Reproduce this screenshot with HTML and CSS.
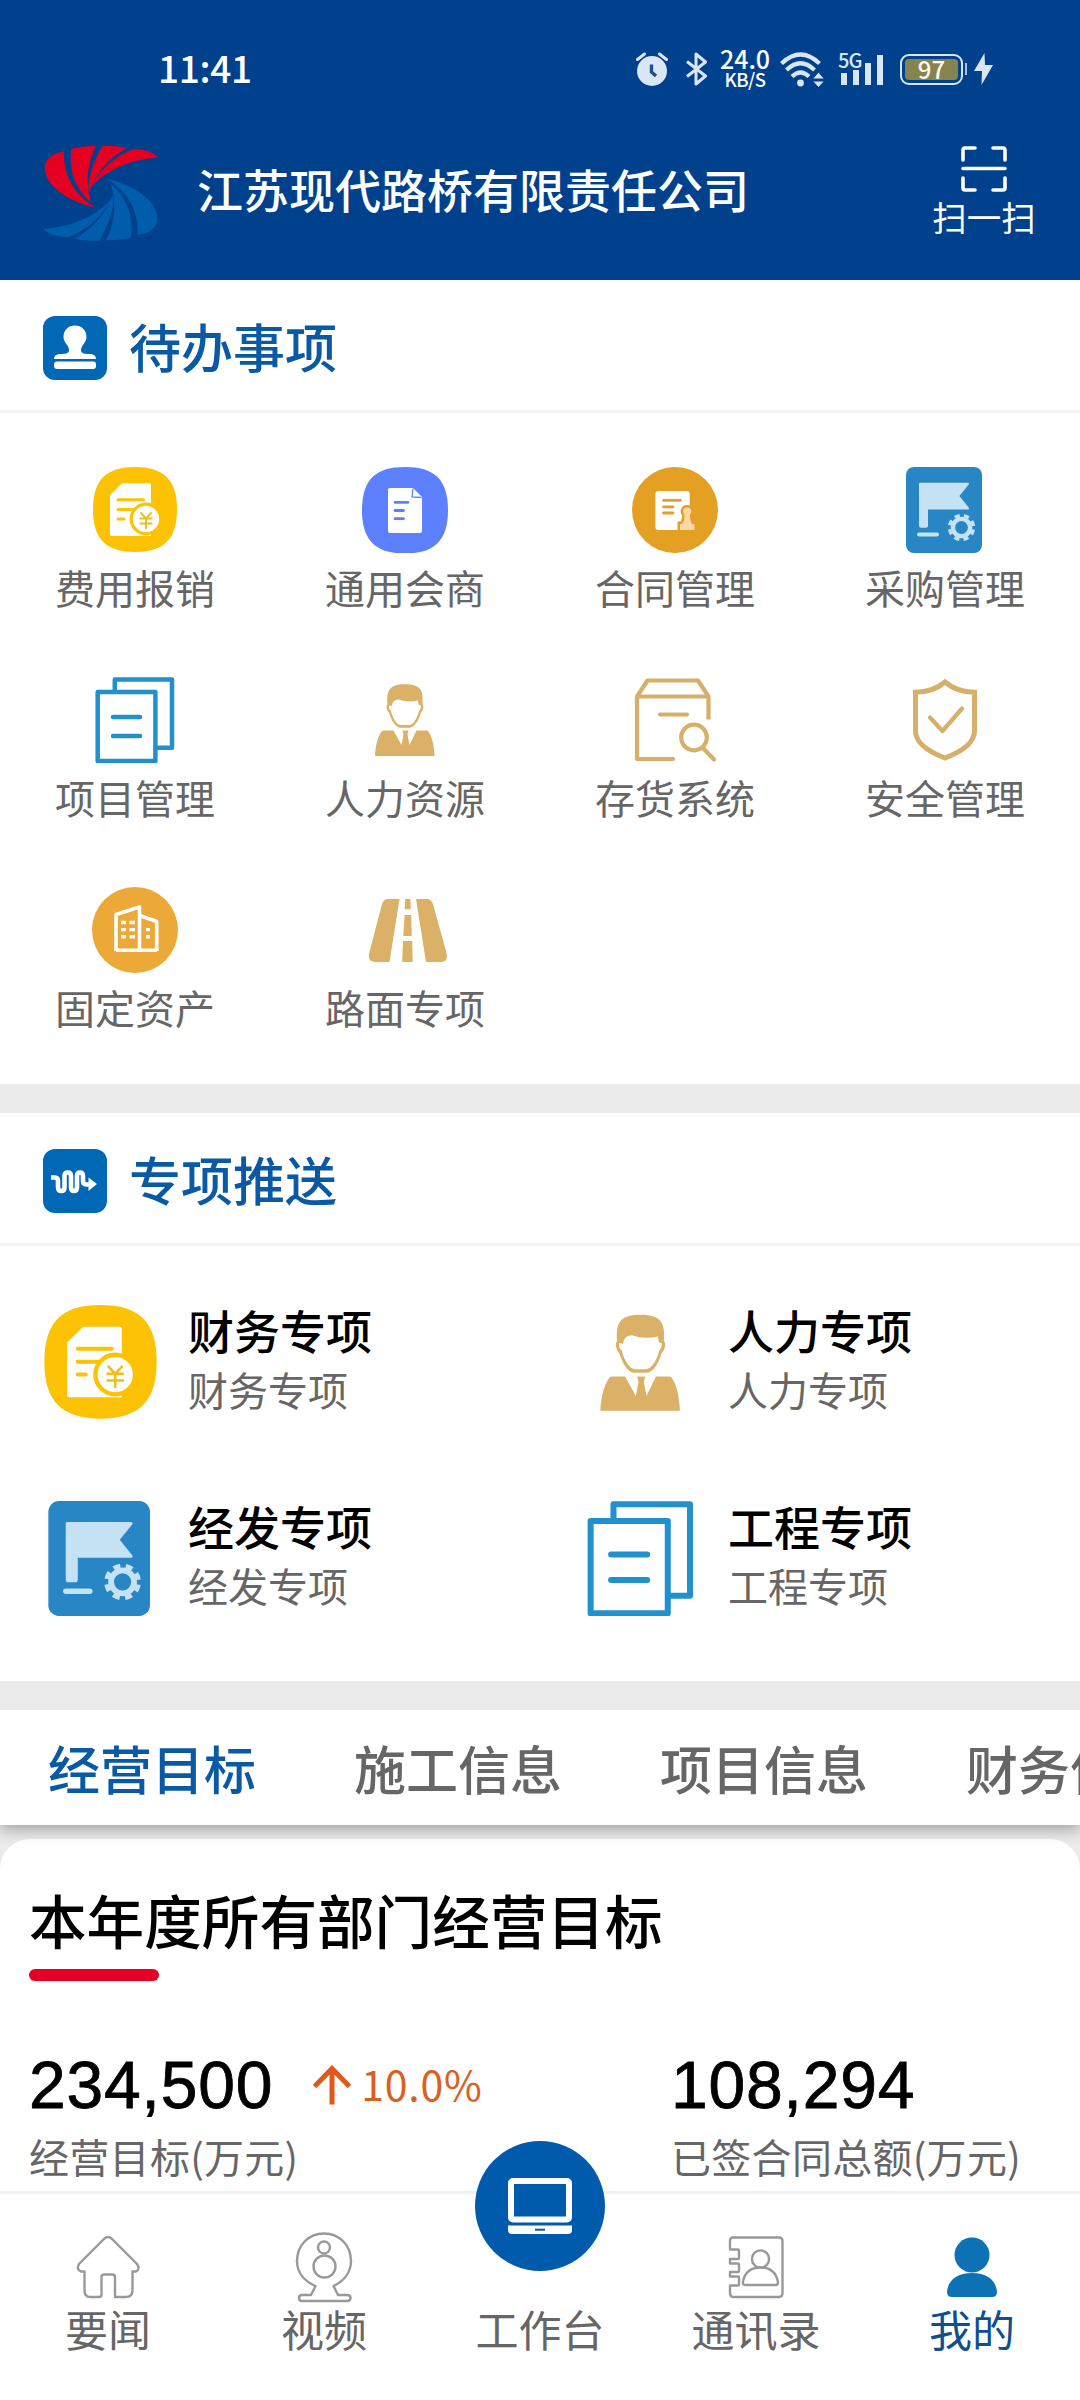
FILE: index.html
```html
<!DOCTYPE html>
<html lang="zh-CN">
<head>
<meta charset="utf-8">
<title>江苏现代路桥有限责任公司</title>
<link rel="stylesheet" href="styles.css">
</head>
<body>
<svg class="defs" aria-hidden="true">
  <symbol id="i-finance" viewBox="0 0 86 86">
    <path fill="#fcc203" d="M43 0C72 0 85 13 85 42.500C85 72 72 85 43 85C14 85 1 72 1 42.500C1 13 14 0 43 0Z"/>
    <path fill="#fff" d="M30 16.300H57Q59 16.300 59 18.300V69H20Q18 69 18 67V28Z"/>
    <path stroke="#fcc203" stroke-width="3" stroke-linecap="round" d="M26 32.700H51.500M26 42.500H46M26 52H32"/>
    <circle cx="54" cy="52" r="14.800" fill="#fff" stroke="#fcc203" stroke-width="3.200"/>
    <path stroke="#f0bd1e" stroke-width="1.900" fill="none" d="M48.500 45.500L54 51.500L59.500 45.500M47.500 51.500H60.500M47.500 56.500H60.500M54 51.500V62"/>
  </symbol>
  <symbol id="i-person" viewBox="0 0 86 86">
    <path fill="#dab167" d="M25.500 27C24.500 14 27 7.300 43 7.300C59 7.300 61.500 14 60.500 27C62.500 29 61 34 58.800 36C56.500 44 52 50.700 47.500 50.700H38.500C34 50.700 29.500 44 27.200 36C25 34 23.500 29 25.500 27Z"/>
    <path fill="#fff" d="M30 29C30.500 25 32 23 37 22.600C42 24.800 49 25 56 23.600C56.500 26 56 28.500 59 28.500C59 31 58.500 33 57 34C55 42 51 48 47 48H39C35 48 31 42 29 34C27.500 33 26.500 31 27 28.500Z"/>
    <path fill="#dab167" d="M13 79C13.500 68 16 59 20 54Q20.500 53.500 22 53.500H31.500L39.500 68L41.500 57.500L40.500 53.500H46.500L45.500 57.500L47.500 68L54.500 53.500H64Q65.500 53.500 66 54C70 59 72 68 72.500 79Z"/>
  </symbol>
  <symbol id="i-flag" viewBox="0 0 86 86">
    <rect x="4" width="76" height="86" rx="8" fill="#2886c4"/>
    <path fill="#c5e1f4" d="M18 15.700H66Q67.500 16 66.700 17.500L57.400 29L66.700 40.500Q67.500 42.500 66 42.500H26V59Q26 60.800 24 60.800H19Q17 60.800 17 59V16.700Q17 15.700 18 15.700Z"/>
    <path stroke="#c5e1f4" stroke-width="4" stroke-linecap="round" d="M17 67.500H35"/>
    <circle cx="59.500" cy="60.500" r="8.600" fill="none" stroke="#c5e1f4" stroke-width="4.400"/>
    <circle cx="59.500" cy="60.500" r="12" fill="none" stroke="#c5e1f4" stroke-width="3.500" stroke-dasharray="5.200 4.225" stroke-dashoffset="-2.100"/>
  </symbol>
  <symbol id="i-docs" viewBox="0 0 86 86">
    <g fill="none" stroke="#2191cd" stroke-width="4.500" stroke-linejoin="round">
      <path d="M22.800 14V2.400H80V70.800H64"/>
      <rect x="5.700" y="15" width="57.700" height="69"/>
      <path stroke-linecap="round" d="M21 40H48M21 59H48"/>
    </g>
  </symbol>
</svg>

<div class="app">
  <header class="topbar">
    <div class="status">
      <span class="clock">11:41</span>
      <svg class="st-alarm" viewBox="0 0 32 34"><circle cx="16" cy="19" r="15" fill="#dbe6f5"/><path d="M1.500 7.500L8.500 2M30.500 7.500L23.500 2" stroke="#dbe6f5" stroke-width="3" stroke-linecap="round"/><path d="M15.500 12.500V20L20 24" stroke="#1d4f92" stroke-width="3.400" fill="none"/></svg>
      <svg class="st-bt" viewBox="0 0 21 34"><path d="M1 9.500L19.500 24L10 32V2L19.500 10L1 24.500" stroke="#dbe6f5" stroke-width="3" fill="none" stroke-linejoin="round"/></svg>
      <span class="netspeed"><b>24.0</b><i>KB/S</i></span>
      <svg class="st-wifi" viewBox="0 0 44 35"><g fill="none" stroke="#dbe6f5" stroke-width="4.200"><path d="M1.500 11.500Q20.500 -6.500 39.500 11.500"/><path d="M6.500 18Q20.500 4.500 34.500 18"/><path d="M12 24.500Q20.500 16.500 29 24.500"/></g><circle cx="20.500" cy="31" r="3.400" fill="#dbe6f5"/><path fill="#dbe6f5" stroke="#00418e" stroke-width="1" d="M32.500 27L38.500 20L44.500 27ZM32.500 29L38.500 35.500L44.500 29Z"/></svg>
      <span class="signal"><i>5G</i><svg viewBox="0 0 46 34"><g stroke="#dbe6f5" stroke-width="6"><path d="M6 21V33"/><path d="M18 18V33"/><path d="M30 11V33"/><path d="M42 3V33"/></g></svg></span>
      <span class="battery"><em>97</em></span>
      <svg class="st-bolt" viewBox="0 0 19 32"><path d="M10.500 0L0 18H8L7.500 32L19 12H11Z" fill="#dbe6f5"/></svg>
    </div>
    <div class="brand">
      <svg class="logo" viewBox="125 435 336 287" preserveAspectRatio="none">
        <g fill="#e50021">
          <path d="M186 454C148 462 128 480 130 505C133 555 190 600 276 622C252 605 182 560 186 454Z"/>
          <path d="M207 446C230 440 255 438 278 438C256 485 250 535 257 575L264 607C215 560 199 510 207 446Z"/>
          <path d="M298 437Q340 437 368 443C315 475 280 515 257 578C254 535 270 485 298 437Z"/>
          <path d="M386 448C420 447 440 455 460 472C370 478 300 515 260 566C285 515 330 470 386 448Z"/>
        </g>
        <g transform="rotate(180 293 579)" fill="#005dab">
          <path d="M186 454C148 462 128 480 130 505C133 555 190 600 276 622C252 605 182 560 186 454Z"/>
          <path d="M207 446C230 440 255 438 278 438C256 485 250 535 257 575L264 607C215 560 199 510 207 446Z"/>
          <path d="M298 437Q340 437 368 443C315 475 280 515 257 578C254 535 270 485 298 437Z"/>
          <path d="M386 448C420 447 440 455 460 472C370 478 300 515 260 566C285 515 330 470 386 448Z"/>
        </g>
      </svg>
      <h1 class="company">江苏现代路桥有限责任公司</h1>
      <div class="scan">
        <svg viewBox="0 0 46 46"><g fill="none" stroke="#fff" stroke-width="3.600" stroke-linecap="round" stroke-linejoin="round"><path d="M2 14V4Q2 2 4 2H14M32 2H42Q44 2 44 4V14M2 32V42Q2 44 4 44H14M32 44H42Q44 44 44 42V32M2 22.500H44"/></g></svg>
        <span>扫一扫</span>
      </div>
    </div>
  </header>

  <section class="panel todo">
    <div class="panel-head">
      <svg viewBox="0 0 64 64"><rect width="64" height="64" rx="12" fill="#0068b5"/><path fill="#fff" d="M32 9.500C38.500 9.500 43.500 14 43.500 21C43.500 27 38 29 38 34C38 37.500 41 38 46 38Q53 38 53 43H11Q11 38 18 38C23 38 26 37.500 26 34C26 29 20.500 27 20.500 21C20.500 14 25.500 9.500 32 9.500Z"/><rect x="11" y="45.500" width="42" height="7.500" rx="3" fill="#fff"/></svg>
      <h2>待办事项</h2>
    </div>
    <div class="apps">
      <div class="app-item"><svg><use href="#i-finance"/></svg><span>费用报销</span></div>
      <div class="app-item"><svg viewBox="0 0 86 86"><path fill="#5c80fe" d="M43 0C72 0 86 12 86 43.300C86 74 72 86.500 43 86.500C14 86.500 0 74 0 43.300C0 12 14 0 43 0Z"/><path fill="#fff" d="M28 21H51L60 30V64Q60 66 58 66H28Q26 66 26 64V23Q26 21 28 21Z"/><path d="M51 21.500L50 30L59.500 30.500" fill="none" stroke="#5c80fe" stroke-width="1.300"/><path stroke="#5c80fe" stroke-width="2.800" stroke-linecap="round" d="M33 35.300H46M33 43.500H41.500M33 51.700H41.500"/></svg><span>通用会商</span></div>
      <div class="app-item"><svg viewBox="0 0 86 86"><circle cx="43" cy="43" r="43" fill="#e4a023"/><rect x="23.400" y="24" width="34.300" height="39" rx="3" fill="#fff"/><path stroke="#e4a023" stroke-width="2.800" stroke-linecap="round" d="M31.500 33.300H48.500M31.500 39.800H41M31.500 46H41"/><path fill="#fbd7a5" stroke="#e4a023" stroke-width="5" paint-order="stroke" d="M55.300 40.500C59.500 40.500 60.500 45 58 47.500C58 53 59 55.500 60.500 57H62.500V63H48V57H50C52 55 52.500 52 52.500 47.500C50 45 51 40.500 55.300 40.500Z"/></svg><span>合同管理</span></div>
      <div class="app-item"><svg><use href="#i-flag"/></svg><span>采购管理</span></div>
      <div class="app-item"><svg><use href="#i-docs"/></svg><span>项目管理</span></div>
      <div class="app-item"><svg><use href="#i-person"/></svg><span>人力资源</span></div>
      <div class="app-item"><svg viewBox="0 0 86 86"><g fill="none" stroke="#d6b06b" stroke-width="4.200" stroke-linejoin="round" stroke-linecap="round"><path stroke-linecap="butt" d="M76.500 42.500V19.500L66 3.500H15.500L5 19.500V82H41M5 19.500H76.500"/><path d="M28 37.500H55M40.500 82H41M71.500 71.500L82 82.500"/><circle cx="62" cy="60.500" r="12.800"/></g></svg><span>存货系统</span></div>
      <div class="app-item"><svg viewBox="0 0 86 86"><g fill="none" stroke="#d6b06b" stroke-width="5"><path d="M43 5C35 12 25 15 13.500 15.300V54C13.500 66 26 74.500 43 81C60 74.500 72.500 66 72.500 54V15.300C61 15 51 12 43 5Z"/><path stroke-width="4.200" stroke-linecap="round" stroke-linejoin="round" d="M28 40.500L40.500 54L60 31.500"/></g></svg><span>安全管理</span></div>
      <div class="app-item"><svg viewBox="0 0 86 86"><circle cx="43" cy="43" r="43" fill="#eda937"/><path fill="none" stroke="#fff" stroke-width="3.600" stroke-linejoin="round" d="M24 64V27.500L47.500 20V64M47.500 28.500L64.700 34.500V64M24 63.200H64.700"/><path stroke="#fff" stroke-width="3.400" d="M29 35.500H34M37.500 35.500H43M29 42.600H34M37.500 42.600H43M29 49.800H34M37.500 49.800H43M54 42.600H58M54 49.800H58"/></svg><span>固定资产</span></div>
      <div class="app-item"><svg viewBox="0 0 86 86"><path fill="#dab167" d="M37.500 12H26Q21.500 12 20 17L7.200 66Q5.500 75 13 75H27.500ZM54 12H65Q69 12 71 17L84.500 66Q86.500 75 79.500 75H64ZM43.300 12H48.300L48.800 22.300H42.700ZM42.600 28H49.100L49.800 49H41.300ZM41 54H50.200L50.700 75H40.200Z"/></svg><span>路面专项</span></div>
    </div>
  </section>

  <section class="panel push">
    <div class="panel-head">
      <svg viewBox="0 0 64 64"><rect width="64" height="64" rx="12" fill="#0068b5"/><path fill="none" stroke="#fff" stroke-width="4.600" stroke-linejoin="round" d="M8 28.500H12Q15 28.500 15 32.500V38Q15 42 18.500 42Q21.500 42 21.500 38V27Q21.500 23.500 24.700 23.500Q28 23.500 28 27V38Q28 42 31 42Q34 42 34 38V27Q34 23.500 37 23.500Q40 23.500 40 27V32Q40 35.500 44 35.500H48"/><path fill="#fff" d="M45.500 28.500L54 35L45.500 42Z"/></svg>
      <h2>专项推送</h2>
    </div>
    <div class="topics">
      <div class="topic"><svg><use href="#i-finance"/></svg><div><h3>财务专项</h3><p>财务专项</p></div></div>
      <div class="topic"><svg><use href="#i-person"/></svg><div><h3>人力专项</h3><p>人力专项</p></div></div>
      <div class="topic"><svg><use href="#i-flag"/></svg><div><h3>经发专项</h3><p>经发专项</p></div></div>
      <div class="topic"><svg><use href="#i-docs"/></svg><div><h3>工程专项</h3><p>工程专项</p></div></div>
    </div>
  </section>

  <nav class="tabs">
    <span class="tab active">经营目标</span>
    <span class="tab">施工信息</span>
    <span class="tab">项目信息</span>
    <span class="tab">财务信息</span>
  </nav>

  <section class="card">
    <h2 class="card-title">本年度所有部门经营目标</h2>
    <div class="stats">
      <div class="stat">
        <div class="figure"><strong>234,500</strong><svg viewBox="0 0 38 40"><path d="M1.500 21.500L19 3.500L36.500 21.500M19 4V39.500" fill="none" stroke="#e0591a" stroke-width="5"/></svg><span class="rate">10.0%</span></div>
        <p>经营目标(万元)</p>
      </div>
      <div class="stat">
        <div class="figure"><strong>108,294</strong></div>
        <p>已签合同总额(万元)</p>
      </div>
    </div>
  </section>

  <footer class="navbar">
    <div class="nav-item"><svg viewBox="0 0 72 72"><path fill="none" stroke="#999" stroke-width="2.400" stroke-linejoin="round" d="M32.500 7.500Q36 4.500 39.500 7.500L65 33Q68.500 38 64 40.500H60.500V59Q60.500 66 54 66H43V46Q43 43.500 40.500 43.500H32.500Q29.500 43.500 29.500 46V64Q29.500 66 27 66H18Q12.500 66 12.500 59V40.500H9Q4 38.500 7 33Z"/></svg><span>要闻</span></div>
    <div class="nav-item"><svg viewBox="0 0 72 72"><g fill="none" stroke="#999" stroke-width="2.400" stroke-linejoin="round"><path d="M27.500 55C17 50.500 9 42 9 30C9 14 21 2.500 36 2.500C51 2.500 63 14 63 30C63 42 55 50.500 45.500 55L50 64H59Q62.500 64 62.500 67Q62.500 70 59 70H14Q11 70 11 67Q11 64 14 64H23Z"/><circle cx="36" cy="16.500" r="6"/><circle cx="36.500" cy="35.500" r="11"/></g></svg><span>视频</span></div>
    <div class="nav-item center">
      <div class="fab"><svg viewBox="0 0 64 56"><rect x="3" y="3" width="58" height="38.500" rx="2" fill="none" stroke="#fff" stroke-width="6"/><path fill="#fff" d="M0 47.500H64V52Q64 56 60 56H4Q0 56 0 52Z"/><path stroke="#005bac" stroke-width="2" d="M27 51.700H37"/></svg></div>
      <span>工作台</span>
    </div>
    <div class="nav-item"><svg viewBox="0 0 72 72"><g fill="none" stroke="#999" stroke-width="2.400" stroke-linejoin="round"><path d="M12 18.500H18Q19 18.500 19 19.500V27Q19 28 18 28H10V32.500H18Q19 32.500 19 33.500V40Q19 41 18 41H10V45.500H18Q19 45.500 19 46.500V53.500Q19 54.500 18 54.500H10V62Q10 66 13 66H59Q62.500 66 62.500 62V10Q62.500 6.500 59 6.500H13Q10 6.500 10 10V18.500H13"/><circle cx="40.500" cy="28" r="8.600"/><path d="M23 50.500C25 41 31 36.500 40.500 36.500C50 36.500 56 41 58 51Q58 54 56 54H25Q22.500 54 23 50.500Z"/></g></svg><span>通讯录</span></div>
    <div class="nav-item active"><svg viewBox="0 0 72 72"><circle cx="36" cy="24" r="17.500" fill="#0d72b4"/><path fill="#0d72b4" d="M11 61C12 49 21 42 36 42C51 42 60 49 61 61Q61 66 56 66H16Q11 66 11 61Z"/></svg><span>我的</span></div>
  </footer>
</div>
</body>
</html>
```

FILE: styles.css
```css
* { box-sizing: border-box; margin: 0; padding: 0; }

body {
  width: 1080px;
  background: #fff;
  font-family: "Noto Sans CJK SC", sans-serif;
  color: #666;
}

svg { display: block; flex: none; }
.defs { display: none; }
h1, h2, h3 { font-weight: 500; white-space: nowrap; }
i, em, b { font-style: normal; font-weight: inherit; }

.app {
  width: 1080px;
  height: 2400px;
  display: flex;
  flex-direction: column;
  overflow: hidden;
}

/* header */
.topbar { height: 280px; background: #00418e; color: #fff; flex: none; }

.status {
  height: 138px;
  padding: 0 87px 0 158px;
  display: flex;
  align-items: center;
}
.clock {
  flex: 1;
  padding-bottom: 5px;
  font-size: 37px;
  line-height: 40px;
  font-weight: 500;
  letter-spacing: -0.3px;
}
.st-alarm { width: 32px; height: 34px; }
.st-bt { width: 21px; height: 34px; margin-left: 18px; }
.netspeed {
  width: 50px;
  margin-left: 13px;
  display: flex;
  flex-direction: column;
  align-items: center;
  font-weight: 500;
}
.netspeed b { font-size: 25px; line-height: 23px; font-weight: 500; margin-top: -4px; }
.netspeed i { font-size: 18.5px; line-height: 18px; letter-spacing: -0.5px; }
.st-wifi { width: 44px; height: 35px; margin-left: 10px; }
.signal { position: relative; margin: 0 0 0 14px; }
.signal svg { width: 46px; height: 34px; }
.signal i {
  position: absolute;
  left: 0;
  top: -1px;
  font-size: 20px;
  line-height: 18px;
  font-weight: 500;
  letter-spacing: -1px;
  color: #dbe6f5;
}
.battery {
  position: relative;
  width: 63px;
  height: 31px;
  margin-left: 16px;
  padding: 3px;
  border: 2.5px solid #dbe6f5;
  border-radius: 9px;
}
.battery em {
  display: block;
  height: 21px;
  border-radius: 4px;
  background: #85834f;
  color: #fff8e8;
  font-size: 24px;
  line-height: 19px;
  font-weight: 500;
  text-align: center;
}
.battery::after {
  content: "";
  position: absolute;
  right: -6px;
  top: 7px;
  width: 2.5px;
  height: 12px;
  background: #a9c0df;
}
.st-bolt { width: 19px; height: 32px; margin-left: 11px; }

.brand { display: flex; align-items: flex-start; padding: 8px 0 0 43px; }
.logo { width: 116px; height: 96px; margin-top: -1px; }
.company { margin-left: 38px; padding-top: 12px; font-size: 46px; line-height: 60px; flex: 1; }
.scan {
  width: 192px;
  display: flex;
  flex-direction: column;
  align-items: center;
  font-size: 34.5px;
  line-height: 46px;
}
.scan svg { width: 46px; height: 46px; }
.scan span { padding-top: 1px; }

/* panels */
.panel { flex: none; border-bottom: 29px solid #ebebeb; }
.panel-head {
  height: 133px;
  padding: 5px 0 0 43px;
  display: flex;
  align-items: center;
  gap: 22px;
  border-bottom: 3px solid #f2f2f2;
}
.panel-head svg { width: 64px; height: 64px; }
.panel-head h2 { font-size: 52px; line-height: 70px; padding-bottom: 4px; color: #0a59a5; }

.todo { height: 833px; }
.apps { display: grid; grid-template-columns: repeat(4, 270px); grid-auto-rows: 210px; padding-top: 54px; }
.app-item { display: flex; flex-direction: column; align-items: center; }
.app-item svg { width: 86px; height: 86px; }
.app-item span { margin-top: 4px; font-size: 40px; line-height: 60px; }

.push { height: 597px; }
.topics { display: grid; grid-template-columns: repeat(2, 540px); grid-auto-rows: 195.5px; padding-top: 57px; }
.topic { display: flex; align-items: flex-start; gap: 30px; padding-left: 43px; }
.topic svg { width: 115px; height: 115px; margin-top: 2px; }
.topic h3 { font-size: 46px; line-height: 58px; color: #000; margin-top: -3px; }
.topic p { font-size: 40px; line-height: 60px; margin-top: 1px; }

/* tabs */
.tabs {
  position: relative;
  z-index: 1;
  flex: none;
  height: 115px;
  padding-left: 48px;
  display: flex;
  align-items: center;
  gap: 98px;
  background: #fff;
  box-shadow: 0 5px 14px rgba(0, 0, 0, 0.3);
  clip-path: inset(0 0 -30px 0);
  font-size: 52px;
  line-height: 70px;
  font-weight: 500;
  white-space: nowrap;
}
.tab.active { color: #0a59a5; }

/* target card */
.card {
  flex: 1;
  min-height: 0;
  padding: 51px 29px 0;
  background: #fff;
  border-radius: 30px 30px 0 0;
  margin-top: 14px;
  box-shadow: 0 0 0 40px #ebebeb;
}
.card-title { font-size: 57.6px; line-height: 58px; color: #000; }
.card-title::after {
  content: "";
  display: block;
  width: 130px;
  height: 12px;
  margin-top: 21px;
  border-radius: 6px;
  background: #e50026;
}
.stats { display: grid; grid-template-columns: 642px auto; padding-top: 69px; }
.stat p { font-size: 40px; line-height: 56px; margin-top: 8px; white-space: nowrap; letter-spacing: 0.3px; }
.figure { height: 70px; display: flex; align-items: center; }
.figure strong {
  font: 400 66px/70px "Liberation Sans", Arial, sans-serif;
  color: #000;
  letter-spacing: 0.8px;
  -webkit-text-stroke: 0.8px #000;
}
.figure svg { width: 38px; height: 40px; margin-left: 40px; }
.rate { margin: -5px 0 0 10px; font-size: 41px; line-height: 60px; letter-spacing: 0.8px; color: #d9601f; }

/* bottom navigation */
.navbar {
  position: relative;
  z-index: 2;
  flex: none;
  height: 209px;
  display: grid;
  grid-template-columns: repeat(5, 216px);
  background: #fff;
  border-top: 3px solid #f2f2f2;
}
.nav-item {
  display: flex;
  flex-direction: column;
  align-items: center;
  padding-top: 37px;
  font-size: 43px;
  line-height: 60px;
}
.nav-item > svg { width: 72px; height: 72px; }
.nav-item > span { margin-top: -5px; }
.nav-item.active { color: #0d4f8f; }
.nav-item.center { padding-top: 0; }
.fab {
  width: 130px;
  height: 130px;
  margin-top: -53px;
  margin-bottom: 32px;
  border-radius: 50%;
  background: #005bac;
  display: flex;
  align-items: center;
  justify-content: center;
}
.fab svg { width: 64px; height: 56px; }
```
